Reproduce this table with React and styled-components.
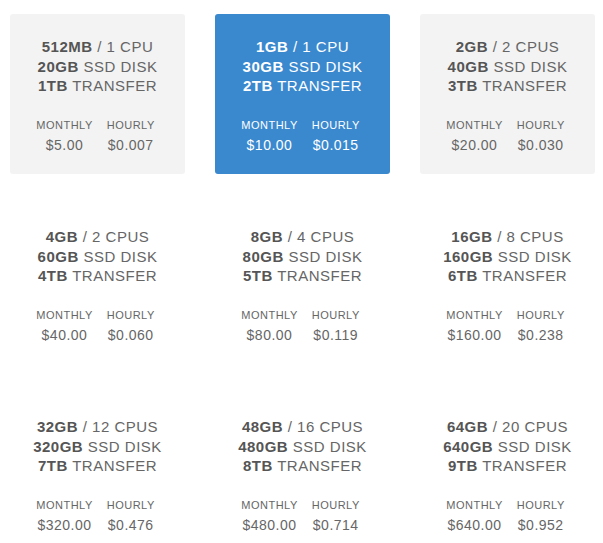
import React from "react";
import styled, { createGlobalStyle } from "styled-components";

const GlobalStyle = createGlobalStyle`
  html, body {
    margin: 0;
    padding: 0;
    background: #ffffff;
  }
  body {
    font-family: "Liberation Sans", Arial, Helvetica, sans-serif;
  }
`;

const plans = [
  { ram: "512MB", cpu: "1 CPU", disk: "20GB", transfer: "1TB", monthly: "$5.00", hourly: "$0.007" },
  { ram: "1GB", cpu: "1 CPU", disk: "30GB", transfer: "2TB", monthly: "$10.00", hourly: "$0.015", active: true },
  { ram: "2GB", cpu: "2 CPUS", disk: "40GB", transfer: "3TB", monthly: "$20.00", hourly: "$0.030", boxed: true },
  { ram: "4GB", cpu: "2 CPUS", disk: "60GB", transfer: "4TB", monthly: "$40.00", hourly: "$0.060" },
  { ram: "8GB", cpu: "4 CPUS", disk: "80GB", transfer: "5TB", monthly: "$80.00", hourly: "$0.119" },
  { ram: "16GB", cpu: "8 CPUS", disk: "160GB", transfer: "6TB", monthly: "$160.00", hourly: "$0.238" },
  { ram: "32GB", cpu: "12 CPUS", disk: "320GB", transfer: "7TB", monthly: "$320.00", hourly: "$0.476" },
  { ram: "48GB", cpu: "16 CPUS", disk: "480GB", transfer: "8TB", monthly: "$480.00", hourly: "$0.714" },
  { ram: "64GB", cpu: "20 CPUS", disk: "640GB", transfer: "9TB", monthly: "$640.00", hourly: "$0.952" }
];

const Grid = styled.div`
  display: grid;
  grid-template-columns: repeat(3, 175px);
  column-gap: 30px;
  row-gap: 30.5px;
  padding: 14px 10px;
`;

const Card = styled.div`
  box-sizing: border-box;
  height: 159.5px;
  padding: 23px 0 0;
  border-radius: 3px;
  text-align: center;
  letter-spacing: 0.5px;
  background: ${p => (p.$active ? "#3a89cf" : p.$boxed ? "#f3f3f3" : "transparent")};
  color: ${p => (p.$active ? "#ffffff" : "#666666")};
`;

const Specs = styled.div`
  font-size: 15px;
  line-height: 19.5px;

  strong {
    font-weight: 700;
    color: ${p => (p.$active ? "#ffffff" : "#555555")};
  }
`;

const Pricing = styled.div`
  display: flex;
  justify-content: center;
  gap: 14px;
  margin-top: 22px;
  padding-right: 4px;
`;

const PriceCol = styled.div`
  display: flex;
  flex-direction: column;
  align-items: center;
`;

const Label = styled.div`
  font-size: 11px;
  line-height: 14px;
  text-transform: uppercase;
`;

const Amount = styled.div`
  font-size: 14px;
  line-height: 18px;
  margin-top: 4.5px;
`;

const Plan = ({ plan, index }) => (
  <Card $active={plan.active} $boxed={index === 0 || plan.boxed}>
    <Specs $active={plan.active}>
      <div>
        <strong>{plan.ram}</strong> / {plan.cpu}
      </div>
      <div>
        <strong>{plan.disk}</strong> SSD DISK
      </div>
      <div>
        <strong>{plan.transfer}</strong> TRANSFER
      </div>
    </Specs>
    <Pricing>
      <PriceCol>
        <Label>Monthly</Label>
        <Amount>{plan.monthly}</Amount>
      </PriceCol>
      <PriceCol>
        <Label>Hourly</Label>
        <Amount>{plan.hourly}</Amount>
      </PriceCol>
    </Pricing>
  </Card>
);

export default function App() {
  return (
    <>
      <GlobalStyle />
      <Grid>
        {plans.map((plan, i) => (
          <Plan key={`plan-${plan.ram}`} plan={plan} index={i} />
        ))}
      </Grid>
    </>
  );
}
